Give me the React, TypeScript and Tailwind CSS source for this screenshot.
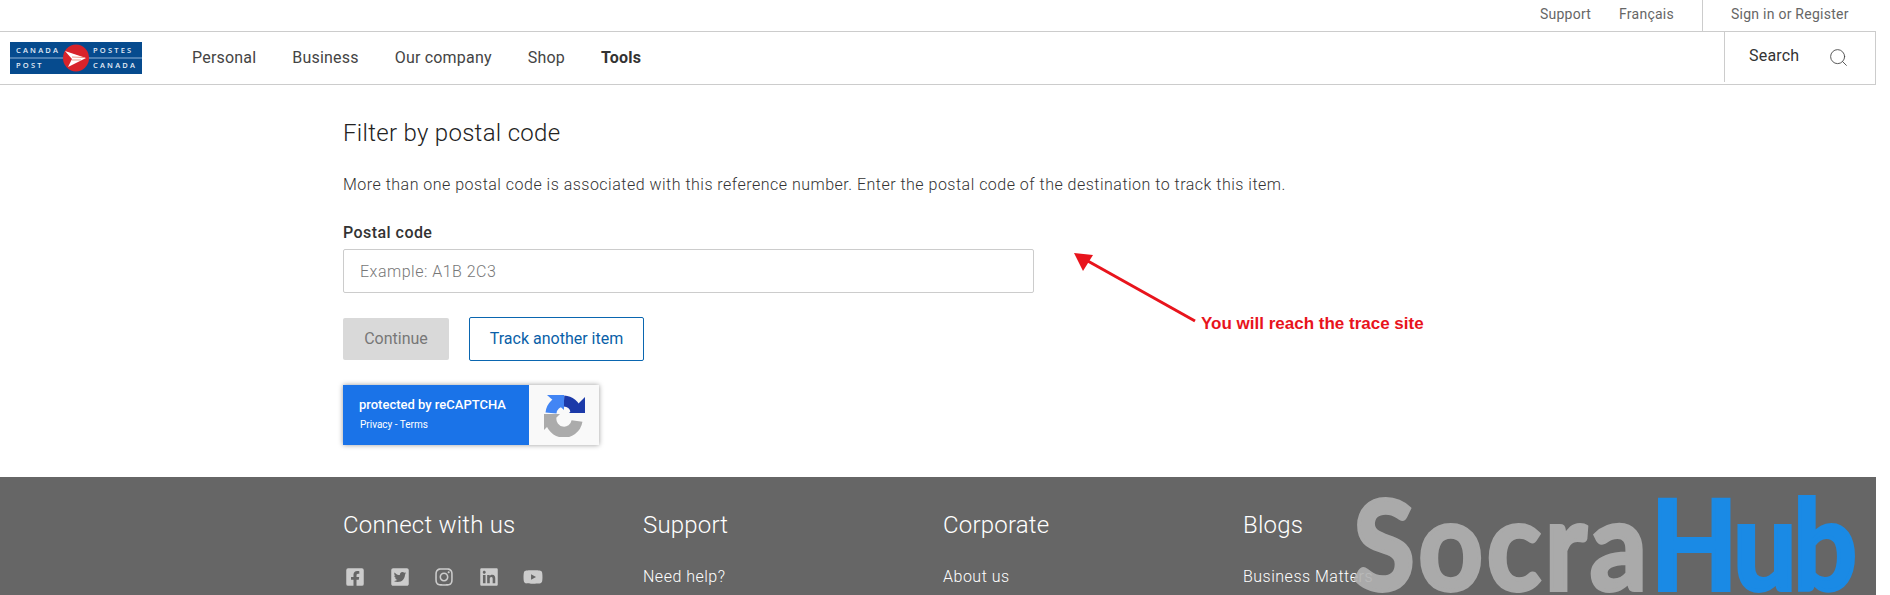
import { Search } from 'lucide-react';
import { FaFacebookSquare, FaTwitterSquare, FaInstagram, FaLinkedin, FaYoutube } from 'react-icons/fa';

const navLinks = [
  { title: 'Personal', gap: 'mr-[36px]' },
  { title: 'Business', gap: 'mr-[36px]' },
  { title: 'Our company', gap: 'mr-[36px]' },
  { title: 'Shop', gap: 'mr-[36px]' },
  { title: 'Tools', gap: 'font-bold text-[#333]' },
];

const footerColumns = [
  { title: 'Connect with us', link: '' },
  { title: 'Support', link: 'Need help?' },
  { title: 'Corporate', link: 'About us' },
  { title: 'Blogs', link: 'Business Matters' },
];

function Logo() {
  return (
    <svg width="132" height="32" viewBox="0 0 132 32" className="block">
      <rect width="132" height="32" fill="#064b8e" />
      <rect y="15.5" width="132" height="1" fill="#8fb4d8" />
      <ellipse cx="66" cy="16" rx="13" ry="13.5" fill="#d8232a" />
      <path d="M55 9 L76 16 L58 25 L62 17 Z" fill="#fff" />
      <path d="M62 15 L74 15.5 M62 18 L71 18" stroke="#e98" strokeWidth="1" />
      <g fill="#e4edf6" fontFamily="'Open Sans', sans-serif" fontSize="7.5" fontWeight="600" letterSpacing="2.2">
        <text x="6" y="11">CANADA</text>
        <text x="6" y="26">POST</text>
        <text x="83" y="11">POSTES</text>
        <text x="83" y="26">CANADA</text>
      </g>
    </svg>
  );
}

function RecaptchaIcon() {
  return (
    <svg width="44" height="44" viewBox="0 0 44 44" className="block">
      <path d="M22 8 A13 13 0 0 1 34 18" fill="none" stroke="#1c3aa9" strokeWidth="11" />
      <path d="M27 20 H43 V4 Z" fill="#1c3aa9" />
      <path d="M9 20 A13 13 0 0 1 22 8" fill="none" stroke="#4285f4" strokeWidth="11" />
      <path d="M5 2 H22 V17 Z" fill="#4285f4" />
      <path d="M2 21 H18 L2 37 Z" fill="#ababab" />
      <path d="M9 24 A13 13 0 0 0 35 28" fill="none" stroke="#ababab" strokeWidth="11" />
    </svg>
  );
}

export default function App() {
  return (
    <div className="relative w-[1890px] h-[595px] overflow-hidden bg-white font-[Roboto,sans-serif] text-[#333]">
      <div className="w-[1876px]">
        <div className="flex justify-end h-[31px] text-[14px] text-[#666] tracking-[0.25px]">
          <span className="mt-[4px] mr-[28px]">Support</span>
          <span className="mt-[4px] mr-[28px]">Français</span>
          <div className="border-l border-[#ccc] pl-[28px] w-[174px] pt-[4px] whitespace-nowrap">Sign in or Register</div>
        </div>
        <div className="flex items-center h-[54px] border-y border-r border-[#ccc]">
          <div className="ml-[10px] mr-[50px]">
            <Logo />
          </div>
          <nav className="flex items-center text-[16px] text-[#444] tracking-[0.2px]">
            {navLinks.map((link) => (
              <a key={link.title} className={link.gap}>
                {link.title}
              </a>
            ))}
          </nav>
          <div className="ml-auto flex items-center w-[151px] h-[50px] mb-[2px] border-l border-[#ccc] pl-[24px] text-[16px] tracking-[0.2px]">
            <span className="-mt-[2px]">Search</span>
            <Search size={21} strokeWidth={1} className="ml-[29px] mt-[1px] text-[#444]" />
          </div>
        </div>

        <main className="pl-[343px] h-[392px]">
          <h1 className="pt-[33px] text-[24px] font-light leading-[30px] tracking-[0.3px] text-[#222]">Filter by postal code</h1>
          <p className="mt-[25px] text-[16px] font-light leading-[24px] tracking-[0.49px] text-[#333]">
            More than one postal code is associated with this reference number. Enter the postal code of the destination to track this item.
          </p>
          <label className="block mt-[24px] text-[16px] font-medium leading-[24px] tracking-[0.45px]">Postal code</label>
          <input
            className="block mt-[4px] w-[691px] h-[44px] border border-[#ccc] rounded-[2px] px-[16px] text-[16px] font-light tracking-[0.5px] placeholder:text-[#777]"
            placeholder="Example: A1B 2C3"
          />
          <div className="flex items-center gap-[20px] mt-[24px]">
            <button className="w-[106px] h-[42px] bg-[#d9d9d9] rounded-[2px] text-[16px] text-[#777]">Continue</button>
            <button className="w-[175px] h-[44px] border border-[#0a66b0] rounded-[2px] text-[16px] text-[#0a5fa8]">Track another item</button>
          </div>
          <div className="flex w-[256px] h-[60px] mt-[24px] shadow-[0_0_5px_rgba(0,0,0,0.4)] bg-[#f9f9f9]">
            <div className="w-[186px] bg-[#1a73e8] text-white pl-[16px] pt-[12px]">
              <div className="text-[13px] font-medium leading-[16px] whitespace-nowrap">protected by reCAPTCHA</div>
              <div className="text-[10px] leading-[12px] mt-[6px] pl-[1px]">Privacy - Terms</div>
            </div>
            <div className="flex flex-1 items-center justify-center">
              <RecaptchaIcon />
            </div>
          </div>
        </main>

        <footer className="bg-[#666] h-[118px] pl-[343px] pt-[33px] text-white grid grid-cols-[300px_300px_300px_300px]">
          {footerColumns.map((col) => (
            <div key={col.title}>
              <h2 className="text-[24px] font-light leading-[30px] tracking-[0.2px]">{col.title}</h2>
              {col.link ? (
                <p className="mt-[25px] text-[16px] font-light leading-[24px] tracking-[0.5px]">{col.link}</p>
              ) : (
                <div className="flex gap-[24.5px] mt-[27px] ml-[2px] text-[#ccc]">
                  <FaFacebookSquare size={20} />
                  <FaTwitterSquare size={20} />
                  <FaInstagram size={20} />
                  <FaLinkedin size={20} />
                  <FaYoutube size={20} />
                </div>
              )}
            </div>
          ))}
        </footer>
      </div>

      {/* annotation drawn over the page */}
      <svg width="150" height="90" viewBox="0 0 150 90" className="absolute left-[1060px] top-[244px]">
        <path d="M135 77 L26 16" stroke="#e8141c" strokeWidth="3" />
        <path d="M14 9 L33 11 L23 27 Z" fill="#e8141c" />
      </svg>
      <span className="absolute left-[1201px] top-[311px] text-[17px] font-bold font-['Liberation_Sans',sans-serif] text-[#e8141c] whitespace-nowrap">
        You will reach the trace site
      </span>

      {/* watermark */}
      <div className="absolute left-[1353px] top-[467px] origin-left scale-x-[0.91] text-[124px] leading-[150px] font-bold font-[Lato,sans-serif] whitespace-nowrap">
        <span className="opacity-90 tracking-[4px] text-[#b2b2b2] [-webkit-text-stroke:4px_#b2b2b2]">Socra</span>
        <span className="tracking-[-4px] text-[#1a8ae5] [-webkit-text-stroke:4px_#1a8ae5]">Hub</span>
      </div>
    </div>
  );
}
